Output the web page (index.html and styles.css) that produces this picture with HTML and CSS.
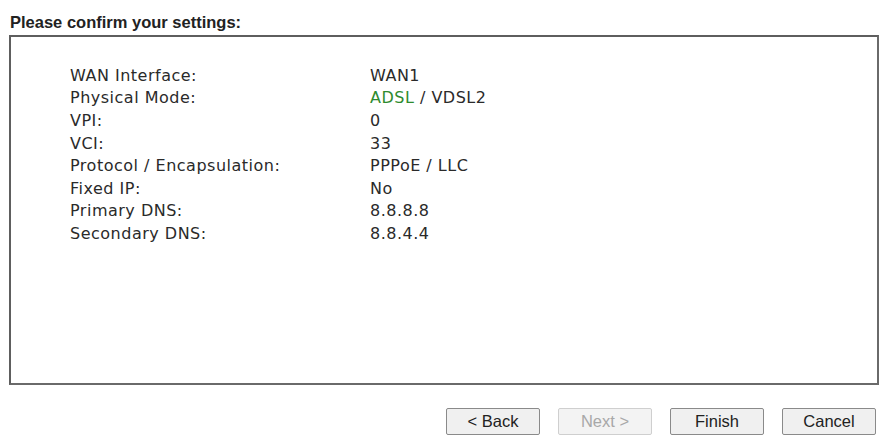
FILE: index.html
```html
<!DOCTYPE html>
<html>
<head>
<meta charset="utf-8">
<link rel="stylesheet" href="styles.css">
</head>
<body>
<div class="page">
  <h1 class="title">Please confirm your settings:</h1>
  <div class="box">
    <div class="grid">
      <div class="label">WAN Interface:</div><div class="value">WAN1</div>
      <div class="label">Physical Mode:</div><div class="value"><span class="green">ADSL</span> / VDSL2</div>
      <div class="label">VPI:</div><div class="value">0</div>
      <div class="label">VCI:</div><div class="value">33</div>
      <div class="label">Protocol / Encapsulation:</div><div class="value">PPPoE / LLC</div>
      <div class="label">Fixed IP:</div><div class="value">No</div>
      <div class="label">Primary DNS:</div><div class="value">8.8.8.8</div>
      <div class="label">Secondary DNS:</div><div class="value">8.8.4.4</div>
    </div>
  </div>
  <div class="buttons">
    <button class="btn">&lt; Back</button>
    <button class="btn" disabled>Next &gt;</button>
    <button class="btn">Finish</button>
    <button class="btn">Cancel</button>
  </div>
</div>
</body>
</html>
```

FILE: styles.css
```css
html, body {
  margin: 0;
  padding: 0;
  background: #ffffff;
}
.page {
  width: 882px;
  height: 448px;
  padding: 0 3px 0 9px;
  box-sizing: border-box;
}
.title {
  margin: 0;
  padding-top: 13px;
  height: 22px;
  font-family: "Liberation Sans", Arial, sans-serif;
  font-weight: bold;
  font-size: 16.5px;
  line-height: 18px;
  color: #222;
  padding-left: 1px;
}
.box {
  height: 350px;
  box-sizing: border-box;
  border: 2px solid #5e5e5e;
  border-right-color: #6a6a6a;
  border-bottom-color: #6a6a6a;
  padding: 27px 0 0 59px;
}
.grid {
  display: grid;
  grid-template-columns: 300px auto;
  grid-auto-rows: 22.6px;
  align-items: center;
  font-family: "DejaVu Sans", Verdana, sans-serif;
  font-size: 16px;
  letter-spacing: 0.5px;
  color: #2a2a2a;
}
.green {
  color: #2e8b2e;
}
.buttons {
  display: flex;
  justify-content: flex-end;
  gap: 18px;
  margin-top: 23px;
  padding-right: 3px;
}
.btn {
  width: 94px;
  height: 27px;
  font-family: "Liberation Sans", Arial, sans-serif;
  font-size: 16.5px;
  color: #222;
  background: #f0f0f0;
  border: 1px solid #8a8a8a;
  border-radius: 2px;
  padding: 0;
}
.btn:disabled {
  color: #a8a8a8;
  border-color: #cfcfcf;
  background: #f3f3f3;
}
```
